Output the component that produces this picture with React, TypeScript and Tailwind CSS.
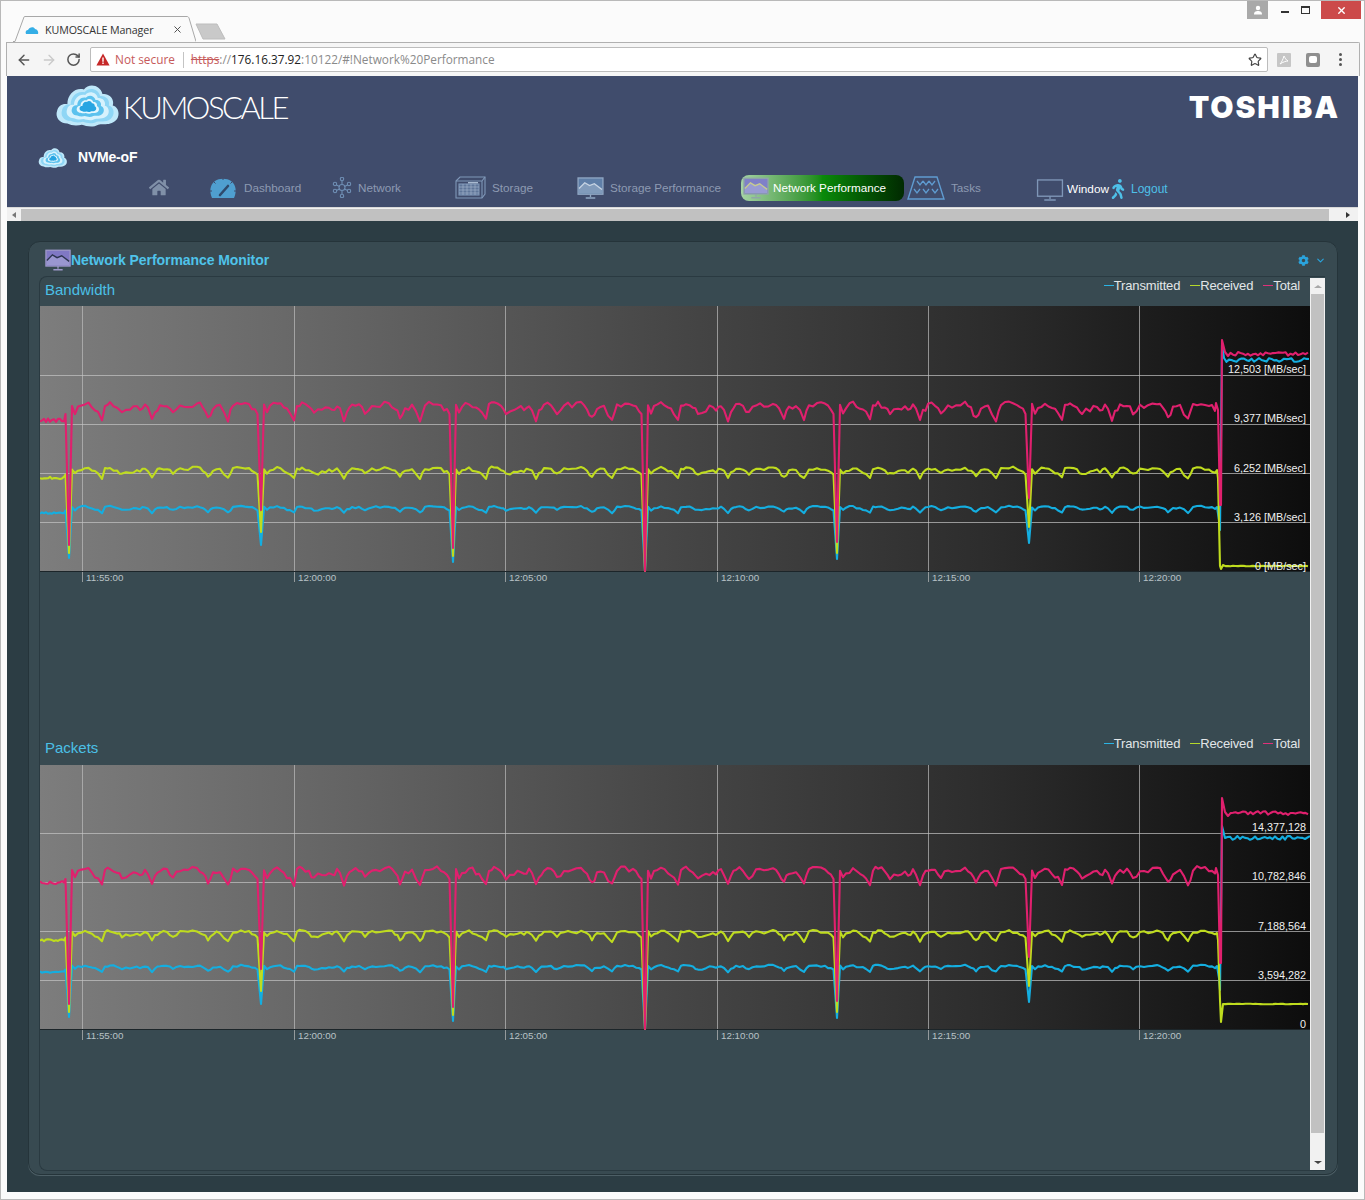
import { ArrowLeft, ArrowRight, ChevronDown, RotateCw, Star, X } from "lucide-react";
import { FaCog, FaHome, FaWalking } from "react-icons/fa";

const sans = "font-['Liberation_Sans',Arial,sans-serif]";
const chromeFont = "font-['Open_Sans','Noto_Sans',sans-serif]";

const CLOUD =
  "M12 36C4 36 0 30 2 25C3 20 8 18 12 19C12 10 20 4 28 6C33 0 44 2 46 10C52 9 58 14 56 20C62 21 64 30 58 34C52 38 46 36 42 37C36 40 30 38 26 37C22 38 16 38 12 36Z";

function Cloud({ className }: { className: string }) {
  const rings = [
    { s: 1, fill: "#bfe8fa" },
    { s: 0.84, fill: "#8fd6f5" },
    { s: 0.68, fill: "#d7f2fd" },
    { s: 0.52, fill: "#5cc2ee" },
    { s: 0.36, fill: "#e4f7fe" },
    { s: 0.27, fill: "#27a5e2" },
  ];
  return (
    <svg viewBox="0 2 64 37" preserveAspectRatio="none" className={className}>
      {rings.map((r) => (
        <path
          key={r.s}
          d={CLOUD}
          fill={r.fill}
          transform={`translate(${32 - 32 * r.s} ${21 - 21 * r.s}) scale(${r.s})`}
        />
      ))}
    </svg>
  );
}

function Monitor({ className, fill = "none", stroke = "#7f97b8" }: { className: string; fill?: string; stroke?: string }) {
  return (
    <svg viewBox="0 0 28 23" className={className}>
      <rect x="1" y="1" width="26" height="17" fill={fill} stroke={stroke} strokeWidth="1.4" />
      <path d="M14 18v3M8 22h12" stroke={stroke} strokeWidth="1.4" fill="none" />
    </svg>
  );
}

function PerfMonitor({ className, screen, line, stroke }: { className: string; screen: string; line: string; stroke: string }) {
  return (
    <svg viewBox="0 0 28 23" className={className}>
      <rect x="1" y="1" width="26" height="17" fill={screen} stroke={stroke} strokeWidth="1.4" />
      <path d="M2 12L8 6L13 9L18 7L26 13V17H2Z" fill="#e8eef5" opacity="0.25" />
      <path d="M2 12L8 6L13 9L18 7L26 13" fill="none" stroke={line} strokeWidth="1.4" />
      <path d="M14 18v3M9 22h10" stroke={stroke} strokeWidth="1.4" fill="none" />
    </svg>
  );
}

function Gauge() {
  return (
    <svg viewBox="0 0 28 22" className="h-[22px] w-[28px]">
      <path d="M3 21C0 14 1 8 6 4C10 1 18 1 22 4C27 8 28 14 25 21Z" fill="#4f9fd0" />
      <path d="M11 18L19 9" stroke="#2f4a6c" strokeWidth="2.6" strokeLinecap="round" />
      <path d="M14 1v2M5 5l1.5 1.5M23 5l-1.5 1.5M1 14h2M27 14h-2" stroke="#3f4b6b" strokeWidth="1" />
    </svg>
  );
}

function NetworkIcon() {
  const nodes = [[10, 2], [3, 7], [17, 7], [3, 14], [17, 14], [10, 19]];
  return (
    <svg viewBox="0 0 20 21" className="h-[21px] w-[20px]" fill="none" stroke="#6f8fb5" strokeWidth="1.1">
      {nodes.map(([x, y]) => (
        <circle key={`${x}-${y}`} cx={x} cy={y} r="1.7" />
      ))}
      <circle cx="10" cy="10.5" r="3" />
      <path d="M10 4v3.5M4.5 8l3 1.4M15.5 8l-3 1.4M4.5 13.4l3-1.4M15.5 13.4l-3-1.4M10 13.5V17" />
    </svg>
  );
}

function StorageIcon() {
  return (
    <svg viewBox="0 0 31 23" className="h-[23px] w-[31px]" fill="none" stroke="#7f97b8" strokeWidth="1.1">
      <path d="M1 5L5 1H30V18L27 22H1Z" />
      <path d="M1 5H27V22M27 5L30 1" />
      <rect x="4" y="8" width="20" height="11" fill="#5f7699" />
      <path d="M4 11h20M4 14h20M4 17h20M8 8v11M12 8v11M16 8v11M20 8v11" stroke="#a8bad0" strokeWidth="0.6" />
      <rect x="13" y="6" width="10" height="1.4" fill="#a8bad0" stroke="none" />
    </svg>
  );
}

function TasksIcon() {
  return (
    <svg viewBox="0 0 38 24" className="h-[24px] w-[38px]" fill="none" stroke="#5f9bd0" strokeWidth="1.4">
      <path d="M8 1H30L37 23H1Z" />
      <path d="M10 5l3 4 3-4M16 5l3 4 3-4M22 5l3 4 3-4M7 13l3 4 3-4M16 13l3 4 3-4M25 13l3 4 3-4" strokeWidth="1.3" />
    </svg>
  );
}

function NavItem({ width, gap = "gap-[6px]", icon, label }: { width: string; gap?: string; icon: React.ReactNode; label: string }) {
  return (
    <div className={`flex items-center text-[11.7px] text-[#8d9ab2] ${gap} ${width}`}>
      {icon}
      <span>{label}</span>
    </div>
  );
}

// one repeat of the wobble, [x offset from the dip, y offset from the base line]
const wobble: [number, number][] = [
  [3, -5], [6, 3], [9, -3], [16, -7], [23, -2], [29, 3], [33, 10], [36, -5], [41, -7], [48, -3],
  [53, 3], [61, 0], [68, -3], [71, 0], [76, -5], [79, -1], [83, 10], [86, 1], [91, -5], [98, -5],
  [104, 3], [111, -5], [119, -4], [128, -7], [134, -2], [139, 8], [144, -2], [151, -4], [159, 10],
  [164, -5], [172, -7], [180, -5], [186, 0],
];

type Series = {
  color: string;
  base: number;
  first: number;
  scale: number;
  seed: number;
  dips: number[];
  tail: [number, number][];
  flat: number;
  flatNoise: number;
};

function makeRandom(seed: number) {
  let s = seed;
  return () => {
    s = (s * 16807) % 2147483647;
    return (s % 1000) / 1000;
  };
}

function buildPath(series: Series, top: number) {
  const random = makeRandom(series.seed);
  const pts: [number, number][] = [];
  for (let x = 40; x < 66; x += 2) {
    pts.push([x, series.first + (random() - 0.5) * 4 * series.scale]);
  }
  series.dips.forEach((bottom, i) => {
    const x0 = 69 + 192 * i;
    pts.push([x0 - 3.5, series.base + 4 * series.scale]);
    pts.push([x0, bottom]);
    pts.push([x0 + 3, series.base - 4 * series.scale]);
    wobble.forEach(([dx, dy], k) => {
      const next = wobble[k + 1];
      pts.push([x0 + dx, series.base + dy * series.scale + (random() - 0.5) * 3 * series.scale]);
      if (next && next[0] - dx > 4) {
        // fill the longer stretches with some jitter
        const mid = (dy + next[1]) / 2 + (random() - 0.5) * 6;
        pts.push([x0 + (dx + next[0]) / 2, series.base + mid * series.scale]);
      }
    });
  });
  pts.push(...series.tail);
  const lastX = series.tail[series.tail.length - 1][0];
  for (let x = lastX + 2.5; x <= 1310; x += 2.5) {
    pts.push([x, series.flat + (random() - 0.5) * series.flatNoise]);
  }
  return pts.map(([x, y], i) => `${i ? "L" : "M"}${(x - 40).toFixed(1)} ${(y - top).toFixed(1)}`).join("");
}

const bandwidthSeries: Series[] = [
  {
    color: "#14aee0", base: 509, first: 513, scale: 0.38, seed: 11,
    dips: [558, 545, 562, 571, 559, 543],
    tail: [[1217, 507], [1219, 520], [1220, 530], [1222, 345], [1224, 358]],
    flat: 360, flatNoise: 4,
  },
  {
    color: "#bfdc1e", base: 472, first: 478, scale: 0.62, seed: 23,
    dips: [553, 532, 556, 571, 553, 527],
    tail: [[1217, 470], [1218, 478], [1220, 566], [1221, 569], [1223, 565]],
    flat: 566, flatNoise: 0.6,
  },
  {
    color: "#e0206e", base: 410, first: 420, scale: 1, seed: 37,
    dips: [545, 510, 548, 571, 542, 498],
    tail: [[1216, 403], [1218, 410], [1220, 505], [1221, 505], [1222, 340], [1225, 352], [1228, 356]],
    flat: 354, flatNoise: 4,
  },
];

const packetSeries: Series[] = [
  {
    color: "#14aee0", base: 968, first: 972, scale: 0.38, seed: 41,
    dips: [1017, 1004, 1021, 1029, 1018, 1002],
    tail: [[1217, 966], [1219, 978], [1220, 990], [1222, 826], [1225, 838]],
    flat: 838, flatNoise: 4,
  },
  {
    color: "#bfdc1e", base: 935, first: 940, scale: 0.62, seed: 53,
    dips: [1012, 991, 1015, 1029, 1012, 986],
    tail: [[1217, 933], [1218, 940], [1220, 1000], [1221, 1022], [1223, 1004]],
    flat: 1004, flatNoise: 0.6,
  },
  {
    color: "#e0206e", base: 875, first: 883, scale: 1, seed: 67,
    dips: [1004, 969, 1007, 1029, 1001, 957],
    tail: [[1216, 868], [1218, 875], [1220, 963], [1221, 963], [1222, 798], [1225, 812], [1228, 816]],
    flat: 813, flatNoise: 4,
  },
];

const xTicks = [
  { x: 42, label: "11:55:00" },
  { x: 254, label: "12:00:00" },
  { x: 465, label: "12:05:00" },
  { x: 677, label: "12:10:00" },
  { x: 888, label: "12:15:00" },
  { x: 1099, label: "12:20:00" },
];

function Chart({ id, series, top, height, grid, labels }: { id: string; series: Series[]; top: number; height: number; grid: number[]; labels: string[] }) {
  return (
    <svg width="1270" height={height + 14} className={`block ${sans}`}>
      <defs>
        <linearGradient id={id} x1="0" x2="1" y1="0" y2="0">
          <stop offset="0" stopColor="#7d7d7d" />
          <stop offset="0.25" stopColor="#636363" />
          <stop offset="0.5" stopColor="#464646" />
          <stop offset="0.75" stopColor="#2c2c2c" />
          <stop offset="1" stopColor="#0d0d0d" />
        </linearGradient>
      </defs>
      <rect width="1270" height={height} fill={`url(#${id})`} />
      {xTicks.map((t) => (
        <line key={t.x} x1={t.x + 0.5} x2={t.x + 0.5} y1="0" y2={height + 10} stroke="#bcbcbc" strokeOpacity="0.7" />
      ))}
      {grid.map((y) => (
        <line key={y} x1="0" x2="1270" y1={y + 0.5} y2={y + 0.5} stroke="#c4c4c4" strokeOpacity="0.7" />
      ))}
      <line x1="0" x2="1270" y1={height - 0.5} y2={height - 0.5} stroke="#1c2529" />
      {series.map((s) => (
        <path key={s.color} d={buildPath(s, top)} fill="none" stroke={s.color} strokeWidth="2.1" strokeLinejoin="round" />
      ))}
      {labels.map((label, i) => (
        <text key={label} x="1266" y={[grid[0] - 2, grid[1] - 2, grid[2] - 1, grid[3] - 1, height - 2][i]} textAnchor="end" fontSize="10.8" fill="#f0f0f0" fontFamily="Liberation Sans">
          {label}
        </text>
      ))}
      {xTicks.map((t) => (
        <text key={t.label} x={t.x + 4} y={height + 9} fontSize="9.8" fill="#b9c2c6" fontFamily="Liberation Sans">
          {t.label}
        </text>
      ))}
    </svg>
  );
}

function Legend() {
  const items = [
    { label: "Transmitted", dash: "bg-[#2ab4e4]" },
    { label: "Received", dash: "bg-[#b4d82a]" },
    { label: "Total", dash: "bg-[#e0307a]" },
  ];
  return (
    <div className="flex items-start gap-[10px] text-[13px] leading-[15px] tracking-[-0.15px] text-[#e2e6e8]">
      {items.map((item) => (
        <div key={item.label} className="flex items-center">
          <span className={`h-px w-[10px] ${item.dash}`} />
          <span>{item.label}</span>
        </div>
      ))}
    </div>
  );
}

function Section({ title, className, headHeight, children }: { title: string; className: string; headHeight: string; children: React.ReactNode }) {
  return (
    <div className={className}>
      <div className={`flex items-start justify-between pl-[5px] pr-[10px] ${headHeight}`}>
        <span className="pt-[3px] text-[15px] leading-[18px] text-[#4bc0e6]">{title}</span>
        <Legend />
      </div>
      {children}
    </div>
  );
}

function BrowserChrome() {
  return (
    <div className={`${chromeFont}`}>
      <div className="relative flex h-[41px] items-end bg-[#fbfbfb] pl-[12px]">
        <div className="relative flex h-[26px] w-[183px] items-center pl-[12px] pt-[2px]">
          <svg viewBox="0 0 183 26" className="absolute inset-0 h-full w-full">
            <path d="M-6 25.5H2L11 1C11 0.6 11.5 0.5 12 0.5H174C175 0.5 175.5 1 176 2L183 25.5" fill="#fafafa" stroke="#a8a8a8" />
          </svg>
          <svg viewBox="0 0 14 8" className="relative h-[8px] w-[14px]">
            <path d="M1 8C0 6 1 4 3 4C4 1 9 0 10 3C12 3 14 6 13 8Z" fill="#35aee6" />
          </svg>
          <span className="relative ml-[6px] text-[10.7px] text-[#333] tracking-[-0.1px]">KUMOSCALE Manager</span>
          <X className="absolute left-[159px] top-[8px] h-[11px] w-[11px] text-[#444]" strokeWidth={2} />
        </div>
        <svg viewBox="0 0 32 17" className="mb-[2px] ml-[-1px] h-[17px] w-[32px]">
          <path d="M1 1H22L30 16H8Z" fill="#c9c9c9" stroke="#bdbdbd" />
        </svg>
        <div className="absolute right-[3px] top-0 flex items-start">
          <div className="flex h-[18px] w-[21px] items-center justify-center bg-[#a9a9a9]">
            <svg viewBox="0 0 10 10" className="h-[10px] w-[10px]" fill="#fff">
              <circle cx="5" cy="3" r="2.2" />
              <path d="M1 9.5C1 6.5 3 6 5 6S9 6.5 9 9.5Z" />
            </svg>
          </div>
          <div className="flex h-[18px] w-[27px] items-center justify-center">
            <span className="ml-[6px] mt-[4px] h-[2px] w-[8px] bg-[#333]" />
          </div>
          <div className="flex h-[18px] w-[21px] items-center justify-center">
            <span className="h-[8px] w-[9px] border border-t-2 border-[#333]" />
          </div>
          <div className="ml-[5px] flex h-[18px] w-[40px] items-center justify-center bg-[#cc4a4a]">
            <X className="h-[11px] w-[11px] text-white" strokeWidth={3} />
          </div>
        </div>
      </div>
      <div className="ml-[5px] mr-[4px] flex h-[34px] items-center rounded-tr-[2px] border-r border-t border-l border-[#b0b0b0] bg-[#f5f5f5]">
        <ArrowLeft className="ml-[9px] h-[16px] w-[16px] text-[#555]" strokeWidth={2.2} />
        <ArrowRight className="ml-[9px] h-[16px] w-[16px] text-[#c9c9c9]" strokeWidth={2} />
        <RotateCw className="ml-[9px] h-[15px] w-[15px] text-[#555]" strokeWidth={2.4} />
        <div className="ml-[9px] flex h-[25px] w-[1178px] items-center rounded-[2px] border border-[#bcbcbc] bg-white pl-[5px] text-[11.8px]">
          <svg viewBox="0 0 14 13" className="h-[13px] w-[14px]">
            <path d="M7 0.5L13.6 12.5H0.4Z" fill="#c62828" />
            <path d="M6.3 4.5h1.4v4.2H6.3zM6.3 9.6h1.4v1.4H6.3z" fill="#fff" />
          </svg>
          <span className="ml-[5px] text-[#c65a5a]">Not secure</span>
          <span className="ml-[8px] h-[16px] w-px bg-[#c4c4c4]" />
          <span className="ml-[7px] text-[#c65a5a] line-through">https</span>
          <span className="text-[#8a8a8a]">://</span>
          <span className="text-[#222]">176.16.37.92</span>
          <span className="text-[#8a8a8a]">:10122/#!Network%20Performance</span>
          <Star className="ml-auto mr-[5px] h-[14px] w-[14px] text-[#444]" strokeWidth={2} />
        </div>
        <div className="ml-[9px] flex h-[14px] w-[14px] items-center justify-center rounded-[1px] bg-[#c6c6c6]">
          <svg viewBox="0 0 10 10" className="h-[10px] w-[10px]" fill="none" stroke="#fff" strokeWidth="1">
            <path d="M5 1C4 4 3 7 1 9C4 7 7 6 9 6C7 5 6 3 5 1Z" />
          </svg>
        </div>
        <div className="ml-[15px] flex h-[14px] w-[14px] items-center justify-center rounded-[2px] bg-[#8f8f8f]">
          <span className="h-[7px] w-[8px] rounded-[2px] bg-white" />
        </div>
        <div className="ml-[19px] flex flex-col gap-[2px]">
          <span className="h-[3px] w-[3px] rounded-full bg-[#555]" />
          <span className="h-[3px] w-[3px] rounded-full bg-[#555]" />
          <span className="h-[3px] w-[3px] rounded-full bg-[#555]" />
        </div>
      </div>
    </div>
  );
}

function Header() {
  return (
    <div className={`flex h-[131px] flex-col bg-[#404c6c] ${sans}`}>
      <div className="flex h-[59px] items-center justify-between pl-[48px] pr-[18px]">
        <div className="flex items-center gap-[2px]">
          <Cloud className="h-[42px] w-[66px]" />
          <span className="mt-[3px] font-['Lato',sans-serif] text-[31px] font-light leading-none tracking-[-2.5px] text-white">KUMOSCALE</span>
        </div>
        <span className="mt-[3px] font-['Inter',sans-serif] text-[30px] font-black leading-none tracking-[1.9px] text-white">TOSHIBA</span>
      </div>
      <div className="flex h-[38px] items-center gap-[10px] pl-[31px] pt-[7px]">
        <Cloud className="h-[20px] w-[30px]" />
        <span className="text-[14px] font-bold tracking-[-0.2px] text-white">NVMe-oF</span>
      </div>
      <div className="flex h-[27px] items-center pl-[142px] pt-[2px]">
        <div className="flex w-[60px]">
          <FaHome className="h-[19px] w-[20px] text-[#8090a8]" />
        </div>
        <NavItem width="w-[123px]" gap="gap-[7px]" icon={<Gauge />} label="Dashboard" />
        <NavItem width="w-[123px]" icon={<NetworkIcon />} label="Network" />
        <NavItem width="w-[122px]" icon={<StorageIcon />} label="Storage" />
        <NavItem
          width="w-[164px]"
          icon={<PerfMonitor className="h-[22px] w-[27px]" screen="#5f7fa8" line="#c7d4e4" stroke="#8fa6c2" />}
          label="Storage Performance"
        />
        <div className="w-[166px]">
          <div className="flex h-[26px] w-[163px] items-center gap-[4px] rounded-[8px] bg-gradient-to-r from-[#a5d3a5] via-[#0a8a0a] to-[#012a01] pl-[2px] text-[11.7px] text-white">
            <PerfMonitor className="h-[22px] w-[26px]" screen="#7f80c8" line="#c8cc90" stroke="#8fa6a8" />
            <span>Network Performance</span>
          </div>
        </div>
        <NavItem width="w-[129px]" icon={<TasksIcon />} label="Tasks" />
        <div className="flex w-[75px] items-center gap-[3px] pt-[4px] text-[11.8px] text-white">
          <Monitor className="h-[22px] w-[28px]" />
          <span>Window</span>
        </div>
        <div className="flex items-center gap-[6px] pt-[2px] text-[12px] text-[#4ec0e8]">
          <FaWalking className="h-[20px] w-[14px]" />
          <span>Logout</span>
        </div>
      </div>
    </div>
  );
}

function HorizontalScroll() {
  return (
    <div className="flex h-[14px] items-center border-t border-[#d8d8d8] bg-[#f1f1f1]">
      <span className="ml-[5px] mr-[5px] h-0 w-0 border-y-[3px] border-r-[4px] border-y-transparent border-r-[#777]" />
      <div className="h-[12px] w-[1308px] bg-[#c1c1c1]" />
      <span className="ml-[17px] h-0 w-0 border-y-[3px] border-l-[4px] border-y-transparent border-l-[#333]" />
    </div>
  );
}

function VerticalScroll() {
  return (
    <div className="flex h-[892px] w-[15px] flex-col items-center bg-[#f1f1f1]">
      <div className="flex h-[16px] items-center">
        <span className="h-0 w-0 border-x-[4px] border-b-[3px] border-x-transparent border-b-[#a8a8a8]" />
      </div>
      <div className="h-[839px] w-[13px] bg-[#c1c1c1]" />
      <div className="mt-auto flex h-[16px] items-center">
        <span className="h-0 w-0 border-x-[4px] border-t-[3px] border-x-transparent border-t-[#444]" />
      </div>
    </div>
  );
}

export default function App() {
  return (
    <div className="h-[1200px] w-[1365px] overflow-hidden border border-[#b9b9b9] bg-[#fbfbfb] [box-sizing:border-box]">
      <BrowserChrome />
      <div className={`ml-[6px] w-[1351px] ${sans}`}>
        <Header />
        <HorizontalScroll />
        <div className="h-[971px] bg-[#2c3d44] pl-[21px] pt-[20px]">
          <div className="h-[934px] w-[1310px] rounded-[12px] border border-[#25343a] bg-[#384a51] pl-[10px] shadow-[0_1px_0_#4d5f66]">
            <div className="flex h-[34px] items-center pl-[6px] pr-[11px] pt-[2px]">
              <PerfMonitor className="h-[22px] w-[26px]" screen="#8078c4" line="#2d3550" stroke="#9d97c9" />
              <span className="text-[14px] font-bold tracking-[-0.07px] text-[#4fc3ea]">Network Performance Monitor</span>
              <FaCog className="ml-auto h-[11px] w-[11px] text-[#2aa4de]" />
              <ChevronDown className="ml-[6px] h-[11px] w-[11px] text-[#2aa4de]" strokeWidth={2.5} />
            </div>
            <div className="flex h-[895px] w-[1286px] rounded-l-[8px] border-l border-t border-b border-[#2a3a41] pt-px">
              <div className="w-[1270px]">
                <Section title="Bandwidth" className="h-[458px]" headHeight="h-[28px]">
                  <Chart
                    id="bw"
                    series={bandwidthSeries}
                    top={306}
                    height={266}
                    grid={[69, 118, 167, 216]}
                    labels={["12,503 [MB/sec]", "9,377 [MB/sec]", "6,252 [MB/sec]", "3,126 [MB/sec]", "0 [MB/sec]"]}
                  />
                </Section>
                <Section title="Packets" className="h-[434px]" headHeight="h-[29px]">
                  <Chart
                    id="pk"
                    series={packetSeries}
                    top={765}
                    height={265}
                    grid={[68, 117, 166, 215]}
                    labels={["14,377,128", "10,782,846", "7,188,564", "3,594,282", "0"]}
                  />
                </Section>
              </div>
              <VerticalScroll />
            </div>
          </div>
        </div>
      </div>
    </div>
  );
}
